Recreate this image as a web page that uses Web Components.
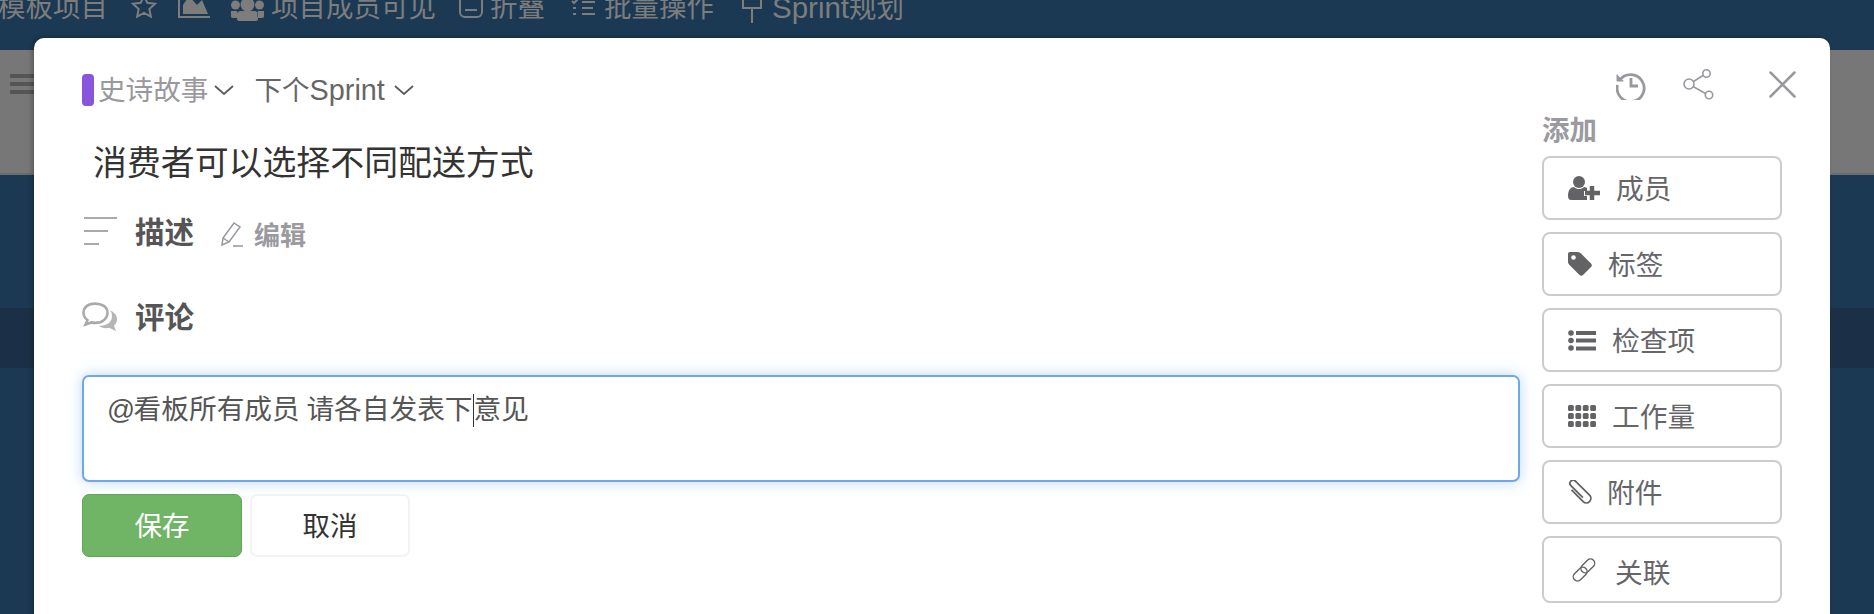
<!DOCTYPE html>
<html lang="zh"><head><meta charset="utf-8"><title>Card</title>
<style>
html,body{margin:0;padding:0;background:#1b3953;overflow:hidden}
body{font-family:"Liberation Sans","Noto Sans CJK SC",sans-serif}
</style></head>
<body>
<kanban-page>
  <top-bar></top-bar>
  <board-band></board-band>
  <card-modal slot="modal">
    <card-tags></card-tags>
    <card-title>消费者可以选择不同配送方式</card-title>
    <section-row kind="desc" style="--mt:27px">描述</section-row>
    <section-row kind="comment" style="--mt:45px">评论</section-row>
    <comment-box></comment-box>
    <side-panel slot="side">
      <side-button icon="member" style="--gap:16px">成员</side-button>
      <side-button icon="tag" style="--gap:16px">标签</side-button>
      <side-button icon="list" style="--gap:16px">检查项</side-button>
      <side-button icon="grid" style="--gap:16px">工作量</side-button>
      <side-button icon="clip" style="--gap:15px">附件</side-button>
      <side-button icon="link" style="--gap:18px;--pl:27px;--h:67px;--tm:2px">关联</side-button>
    </side-panel>
  </card-modal>
</kanban-page>
<script>
const FONT='"Liberation Sans","Noto Sans CJK SC",sans-serif';
function def(name,html){
  customElements.define(name,class extends HTMLElement{
    constructor(){super();this.attachShadow({mode:'open'}).innerHTML=typeof html==='function'?html(this):html;}
  });
}
const I={
 member:'<svg width="32" height="24" viewBox="0 0 32 24"><circle cx="11" cy="6" r="6" fill="#636366"/><path d="M0 20c0-6 3-9 6-9 1.500 1.500 3 2 5 2s3.500-.5 5-2c1 0 2 .3 3 1v3h-3v5h3v4H3c-2 0-3-2-3-4z" fill="#636366"/><path d="M24 10v14M17 17h15" stroke="#636366" stroke-width="4.500" fill="none"/></svg>',
 tag:'<svg width="24" height="24" viewBox="0 0 24 24"><path d="M2 0h8c1 0 2 .5 3 1.500l10 10c1 1 1 2.500 0 3.500l-8 8c-1 1-2.500 1-3.500 0l-10-10C.5 12 0 11 0 10V2C0 .8.800 0 2 0z" fill="#636366"/><circle cx="5.500" cy="5.500" r="2.300" fill="#fff"/></svg>',
 list:'<svg width="28" height="21" viewBox="0 0 28 21" fill="#636366"><circle cx="3" cy="3" r="2.800"/><circle cx="3" cy="10.500" r="2.800"/><circle cx="3" cy="18" r="2.800"/><rect x="8" y="1" width="20" height="4"/><rect x="8" y="8.500" width="20" height="4"/><rect x="8" y="16.500" width="20" height="4"/></svg>',
 grid:'<svg width="28" height="22" viewBox="0 0 28 22" fill="#636366">'+[0,8,16].map(y=>[0,7.400,14.800,22.200].map(x=>`<rect x="${x}" y="${y}" width="5.800" height="6" rx="1.500"/>`).join('')).join('')+'</svg>',
 clip:'<svg width="24" height="24" viewBox="0 0 24 24" fill="none" stroke="#636366" stroke-width="1.800"><g transform="rotate(-45 12 12) translate(1 -2.500)"><path d="M6.500 7V23.500a4.500 4.500 0 0 0 9 0V3.500a3.200 3.200 0 0 0-6.400 0V20.500"/></g></svg>',
 link:'<svg width="26" height="26" viewBox="0 0 26 26" fill="none" stroke="#636366" stroke-width="1.400"><rect x="1" y="13" width="16" height="8.500" rx="4.250" transform="rotate(-45 9 17)"/><rect x="9" y="4.500" width="16" height="8.500" rx="4.250" transform="rotate(-45 17 9)"/></svg>'
};
const G='#7d7d7d';
def('top-bar',`<style>
:host{display:flex;align-items:center;height:50px;margin:-17px 0 17px -2px;color:${G};font:27.500px/50px ${FONT};white-space:nowrap}
span{display:block}svg{display:block;flex:none;fill:none;stroke:${G}}
small{font-size:29.500px}
</style>
<span>模板项目</span>
<svg style="margin-left:23px;margin-top:-4px" width="26" height="24" viewBox="0 0 28 26" stroke-width="2.200"><path d="M14 2l3.600 7.600 8.300 1-6.100 5.700 1.600 8.200L14 20.400l-7.400 4.100 1.600-8.200L2.100 10.600l8.300-1z"/></svg>
<svg style="margin-left:21px;margin-top:-10px" width="32" height="32" viewBox="0 0 32 32" stroke-width="2"><path d="M1 0v30h31"/><path d="M5 27V18L11 9l8 9 5-5 6 14z" fill="${G}" stroke="none"/></svg>
<svg style="margin-left:21px;margin-top:4px" width="33" height="22" viewBox="0 0 33 22"><g fill="${G}" stroke="none"><circle cx="4.500" cy="6" r="4.500"/><circle cx="28.500" cy="6" r="4.500"/><circle cx="16.500" cy="5.500" r="7"/><path d="M0 12h6l1 3-1 4H2c-2 0-2-1-2-3zM33 12h-6l-1 3 1 4h4c2 0 2-1 2-3zM9 12h15c2 0 3 3 3 6v2c0 1-1 2-2 2H8c-1 0-2-1-2-2v-2c0-3 1-6 3-6z"/></g></svg>
<span style="margin-left:7px">项目成员可见</span>
<svg style="margin-left:23px;margin-top:-6px" width="24" height="28" viewBox="0 0 24 28" stroke-width="2"><rect x="1" y="-4" width="22" height="30" rx="5"/><path d="M6 19h12"/></svg>
<span style="margin-left:7px">折叠</span>
<svg style="margin-left:26px;margin-top:-2px" width="24" height="16" viewBox="0 0 24 16" stroke-width="2"><path d="M1 2l2 2 4-4M11 3h13M11 9h11M11 15h13M2 9h3M2 15h3"/></svg>
<span style="margin-left:9px">批量操作</span>
<svg style="margin-left:26px" width="24" height="30" viewBox="0 0 24 30" stroke-width="2"><path d="M3 0v15h18V0M12 15v15"/></svg>
<span style="margin-left:8px"><small>Sprint</small>规划</span>`);
def('board-band',`<style>:host{display:block;height:125px;box-sizing:border-box;background:#777;border-bottom:2px solid #6c6c6c}
i{display:block;width:30px;height:4px;background:#555;border-radius:1px;margin-bottom:4px}
div{padding:24px 0 0 10px}</style><div><i></i><i></i><i></i></div>`);
def('kanban-page',`<style>
:host{display:block;position:relative;width:1874px;height:614px;overflow:hidden;background:#1b3953;font-family:${FONT}}
.dark{height:60px;margin-top:133px;background:#1b3046}
.modal{position:absolute;left:34px;top:38px}
</style><slot></slot><div class="dark"></div><div class="modal"><slot name="modal"></slot></div>`);
def('card-modal',`<style>
:host{display:flex;width:1796px;height:600px;box-sizing:border-box;background:#fff;border-radius:10px 10px 0 0;box-shadow:-2px -1px 4px rgba(0,0,0,.25);padding:0 0 0 48px;color:#555}
.main{width:1438px;padding-top:36px;flex:none}
.side{margin-left:22px;padding-top:31px}
</style><div class="main"><slot></slot></div><div class="side"><slot name="side"></slot></div>`);
def('card-tags',`<style>
:host{display:flex;align-items:center;height:32px;font-size:27.600px;white-space:nowrap}
.p{width:12px;height:32px;border-radius:4px;background:#8955dc;margin-right:4px}
.a{color:#98989d;margin-top:-4px}.b{color:#666;margin-left:20px;margin-top:-4px}
.b small{font-size:28.800px}
svg{display:block;fill:none;stroke:#5c5c60;stroke-width:1.800;margin-left:6px}
</style><div class="p"></div><span class="a">史诗故事</span><svg width="20" height="10" viewBox="0 0 20 10"><path d="M1 1l9 8 9-8"/></svg><span class="b">下个<small>Sprint</small></span><svg style="margin-left:9px" width="20" height="10" viewBox="0 0 20 10"><path d="M1 1l9 8 9-8"/></svg>`);
def('card-title',`<style>:host{display:block;margin-top:35px;padding-left:11px;font-size:33.900px;line-height:44px;color:#333;white-space:nowrap}</style><slot></slot>`);
def('section-row',h=>{
 const desc=h.getAttribute('kind')==='desc';
 return `<style>
:host{display:flex;align-items:center;height:40px;margin-top:var(--mt);white-space:nowrap}
b{font-size:29.500px;font-weight:700;color:#555;margin-left:${desc?18:17}px;margin-top:-4px}
svg{display:block;flex:none}
.e{font-size:26px;font-weight:700;color:#9a9a9f;margin-left:7px;margin-top:3px}
</style>
${desc?`<svg style="margin-left:2px;margin-top:-2px" width="33" height="28" viewBox="0 0 33 28" fill="none" stroke="#aaa" stroke-width="2"><path d="M0 1h33M0 14h24M0 27h15"/></svg>`:
`<svg width="36" height="30" viewBox="0 0 36 28" preserveAspectRatio="none"><path d="M13 1.500C6 1.500 1.500 5 1.500 10c0 3 2 5.500 4 7l-2 4 6-2c1.300.4 2.600.5 4 .5 7 0 12-4 12-9.500S20 1.500 13 1.500z" fill="none" stroke="#aaa" stroke-width="2.500"/><path d="M28 8c3 1 7 3.500 7 8 0 2.500-1 4.500-3 6l2 5-7-3c-3 .8-7 .5-10-1.500 7-.5 13-3 13-9.500 0-2-.5-3.500-2-5z" fill="#b5b5b5"/></svg>`}
<b><slot></slot></b>
${desc?`<svg style="margin-left:27px;margin-top:4px" width="26" height="26" viewBox="0 0 26 26" fill="none" stroke="#98989d" stroke-width="1.500"><path d="M1 24l1-7L13 2l6 4-11 15zM2 17l6 4M12 25h10"/></svg><span class="e">编辑</span>`:''}`;
});
def('comment-box',`<style>
:host{display:block;margin-top:38px}
.t{box-sizing:border-box;height:107px;border:2px solid #6fa8e6;border-radius:7px;box-shadow:0 0 14px rgba(111,168,230,.45);background:#fff;padding:12px 0 0 23px;font-size:27.700px;line-height:42px;color:#555;white-space:nowrap;word-spacing:-1px}
.at{letter-spacing:-1.500px}
.c{display:inline-block;width:0;height:33px;border-left:1px solid #333;vertical-align:-8px}
.r{display:flex;gap:8px;margin-top:12px}
.s,.x{box-sizing:border-box;width:160px;height:63px;border-radius:7px;display:flex;align-items:center;justify-content:center;font-size:27.500px;padding-bottom:4px}
.s{background:#70b466;border:1px solid #60a856;color:#fff}
.x{background:#fff;border:2px solid #f3f3f3;color:#333}
</style><div class="t"><span class="at">@</span>看板所有成员 请各自发表下<span class="c"></span>意见</div><div class="r"><div class="s">保存</div><div class="x">取消</div></div>`);
def('side-panel',`<style>
:host{display:block;width:254px}
.i{display:flex;align-items:center;height:31px;padding-left:74px}
svg{display:block;flex:none;fill:none}
.l{font-size:27.500px;font-weight:700;color:#9a9a9f;line-height:30px;margin:16px 0 10px;height:30px;white-space:nowrap}
::slotted(side-button){margin-bottom:12px}
</style>
<div class="i">
<svg width="30" height="30" viewBox="0 0 30 30" stroke="#98989d" stroke-width="2.800"><path d="M3.500 10.500A13.500 13.500 0 1 1 1.500 15"/><path d="M1 4.500V11h6.500" fill="#98989d" stroke-width="1"/><path d="M15 8v8h7"/></svg>
<svg style="margin-left:37px" width="31" height="31" viewBox="0 0 31 31" stroke="#98989d" stroke-width="1.600"><circle cx="6" cy="15" r="5"/><circle cx="23.500" cy="4.500" r="3.700"/><circle cx="26" cy="26" r="3.700"/><path d="M10.500 12.500 20 6.500M10.500 17.800 22.500 24.500"/></svg>
<svg style="margin-left:55px" width="27" height="27" viewBox="0 0 27 27" stroke="#98989d" stroke-width="2.500" stroke-linecap="round"><path d="M1.500 1.500l24 24M25.500 1.500l-24 24"/></svg>
</div><div class="l">添加</div><slot></slot>`);
def('side-button',h=>`<style>
:host{display:flex;align-items:center;box-sizing:border-box;width:240px;height:var(--h,64px);border:2px solid #ccc;border-radius:8px;padding-left:var(--pl,24px);font-size:27.700px;color:#66666a;white-space:nowrap}
svg{display:block;flex:none}
span{margin-left:var(--gap);margin-top:var(--tm,-2px)}
</style>${I[h.getAttribute('icon')]}<span><slot></slot></span>`);
</script>
</body></html>
